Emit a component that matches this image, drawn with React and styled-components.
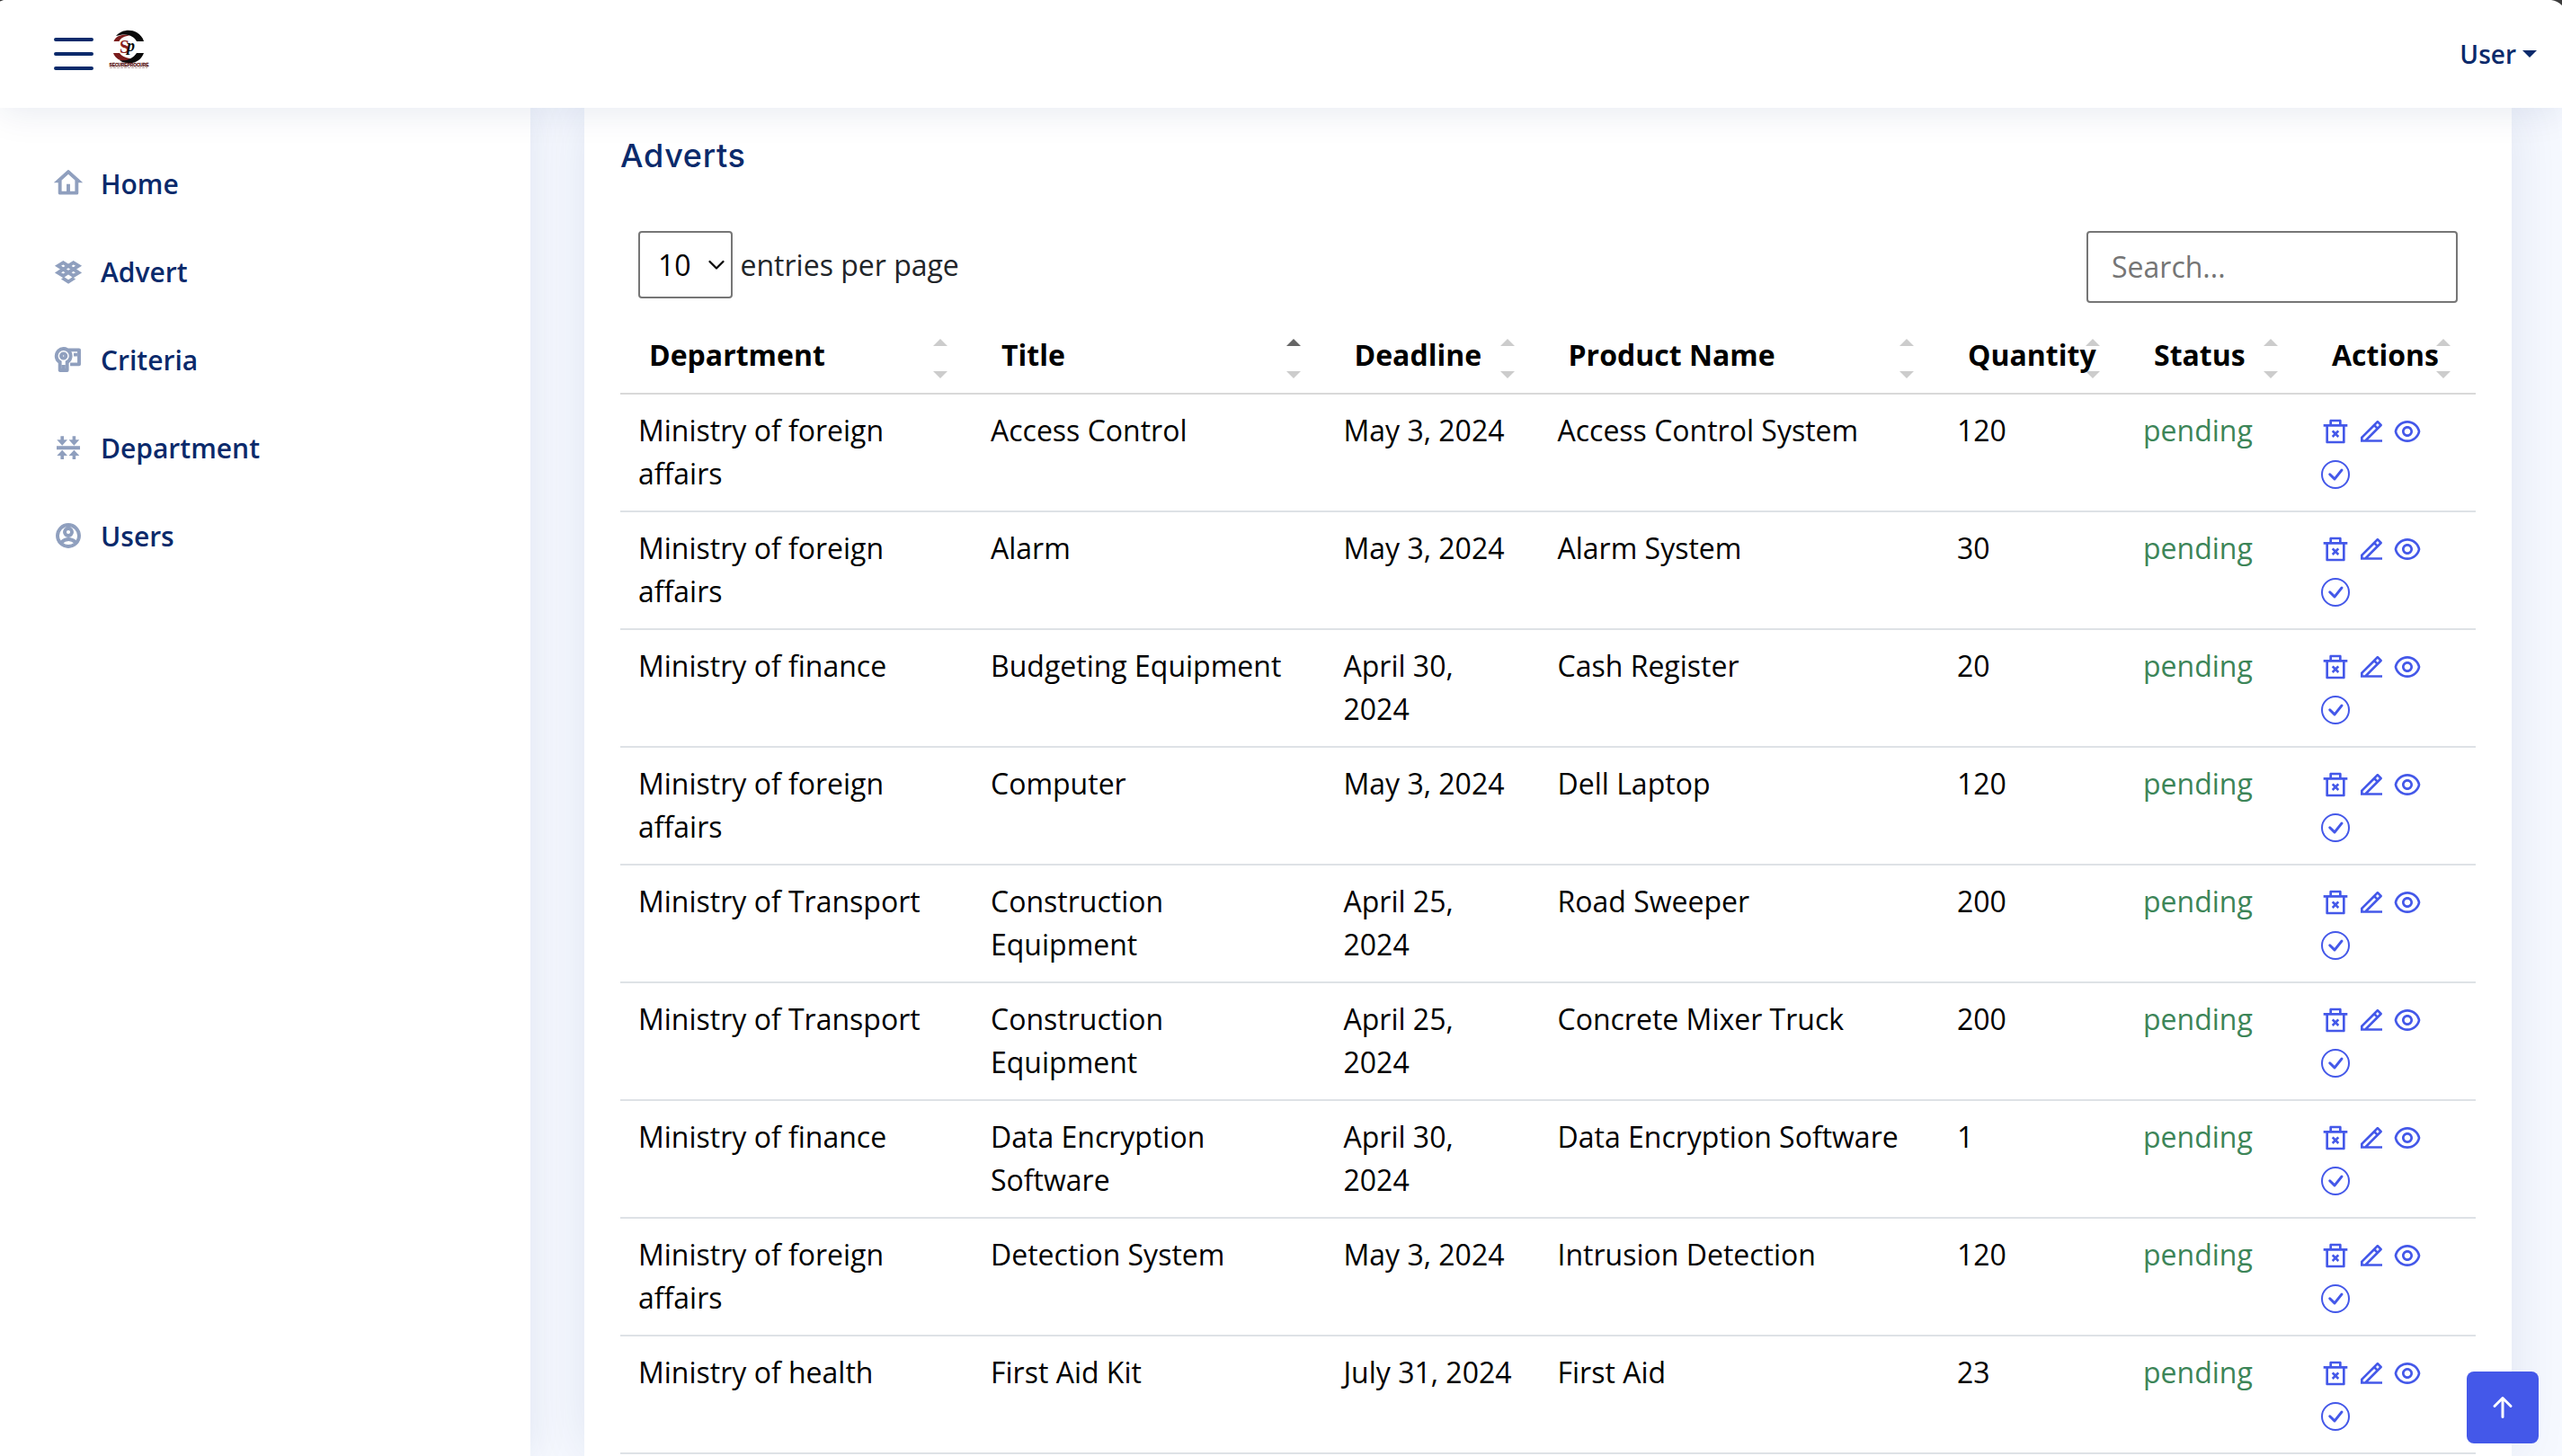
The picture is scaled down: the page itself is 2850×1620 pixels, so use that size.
import React from 'react';
import styled, { createGlobalStyle } from 'styled-components';
import {
  RiHome4Line, RiDropboxLine, RiDvLine, RiAccountCircleLine,
  RiDeleteBin2Line, RiEdit2Line, RiEyeLine,
} from 'react-icons/ri';
import { BsList, BsCheckCircle, BsArrowUpShort } from 'react-icons/bs';

const NAVY = '#0b2a6b';
const BLUE = '#4458e9';

const Global = createGlobalStyle`
  * { box-sizing: border-box; }
  body {
    margin: 0;
    background: #f6f9ff;
    font-family: "Open Sans", sans-serif;
    font-size: 32px;
    line-height: 48px;
    color: #212529;
    overflow: hidden;
  }
`;

const Page = styled.div`
  width: 2850px;
  height: 1620px;
  display: flex;
  flex-direction: column;
  overflow: hidden;
`;

const Header = styled.header`
  position: relative;
  z-index: 3;
  flex: none;
  height: 120px;
  padding: 0 28px 0 50px;
  display: flex;
  align-items: center;
  background: #fff;
  box-shadow: 0 4px 40px rgba(1, 41, 112, 0.1);
`;

const MenuIcon = styled(BsList)`
  width: 64px;
  height: 64px;
  color: ${NAVY};
`;

const LogoSvg = styled.svg`
  width: 48px;
  height: 48px;
  margin: 0 auto 8px 6px;
  overflow: visible;
`;

const UserLink = styled.a`
  display: flex;
  align-items: center;
  gap: 7px;
  font-size: 28px;
  font-weight: 600;
  line-height: 42px;
  color: ${NAVY};
`;

const Caret = styled.span`
  border: 8px solid transparent;
  border-top-color: ${NAVY};
  border-bottom: 0;
`;

const Corner = styled.svg`
  position: absolute;
  top: 0;
  ${(p) => (p.$left ? 'left: 0;' : 'right: 0;')}
`;

const Body = styled.div`
  flex: 1;
  min-height: 0;
  display: flex;
`;

const Sidebar = styled.aside`
  position: relative;
  z-index: 1;
  flex: none;
  width: 590px;
  padding: 35px 0 0 59px;
  background: #fff;
  box-shadow: 0 0 40px rgba(1, 41, 112, 0.1);
`;

const NavItem = styled.a`
  height: 98px;
  display: flex;
  align-items: center;
  gap: 19px;
  font-size: 30px;
  font-weight: 600;
  line-height: 45px;
  color: ${NAVY};
`;

const NavIcon = styled.span`
  width: 34px;
  height: 34px;
  display: flex;
  align-items: center;
  justify-content: center;
  color: #8f9fbe;
  svg {
    flex: none;
    width: 32px;
    height: 32px;
    overflow: visible;
    stroke: currentColor;
    stroke-width: 0.9px;
  }
`;

const Main = styled.main`
  flex: 1;
  padding: 0 56px 0 60px;
`;

const Card = styled.section`
  height: 100%;
  padding: 31px 40px 0;
  background: #fff;
  box-shadow: 0 0 60px rgba(1, 41, 112, 0.1);
`;

const CardTitle = styled.h5`
  margin: 0;
  font-family: Inter, "Open Sans", sans-serif;
  font-size: 36px;
  font-weight: 500;
  line-height: 44px;
  letter-spacing: 0.7px;
  color: ${NAVY};
`;

const Controls = styled.div`
  display: flex;
  justify-content: space-between;
  align-items: flex-start;
  margin-top: 62px;
  padding: 0 20px;
`;

const PerPage = styled.label`
  display: flex;
  align-items: center;
  gap: 8.5px;
`;

const SelectBox = styled.span`
  width: 105px;
  height: 75px;
  padding: 0 7px 0 20px;
  display: flex;
  align-items: center;
  justify-content: space-between;
  border: 2px solid #767676;
  border-radius: 4px;
  color: #000;
`;

const Search = styled.input`
  width: 413px;
  height: 80px;
  padding: 0 24px 1px 26px;
  border: 2px solid #767676;
  border-radius: 4px;
  background: #fff;
  font: inherit;
  &::placeholder { color: #757575; opacity: 1; }
`;

const Table = styled.table`
  width: 2064px;
  margin-top: 17px;
  table-layout: fixed;
  border-collapse: separate;
  border-spacing: 0;
  color: #000;
`;

const HeadCell = styled.th`
  position: relative;
  width: ${(p) => p.$w}px;
  height: 85px;
  padding: 0 0 2px 32px;
  text-align: left;
  font-weight: 700;
  white-space: nowrap;
  border-bottom: 2px solid #d9d9d9;
`;

const Arrow = styled.span`
  position: absolute;
  right: 28px;
  top: ${(p) => (p.$up ? 23 : 59)}px;
  border: 8px solid transparent;
  ${(p) => (p.$up
    ? `border-top: 0; border-bottom-color: rgba(0,0,0,${p.$on ? 0.6 : 0.2});`
    : 'border-bottom: 0; border-top-color: rgba(0,0,0,0.2);')}
`;

const Cell = styled.td`
  height: 131px;
  padding: 16px 20px;
  vertical-align: top;
  border-bottom: 2px solid #dee2e6;
  color: ${(p) => (p.$ok ? '#3c8558' : '#000')};
`;

const Actions = styled.div`
  display: flex;
  flex-wrap: wrap;
  gap: 16.500px 8px;
  width: 140px;
  height: 97px;
  padding-top: 8.500px;
  align-content: flex-start;
  color: ${BLUE};
  svg { width: 32px; height: 32px; }
`;

const ToTop = styled.a`
  position: fixed;
  right: 26px;
  bottom: 14px;
  z-index: 4;
  width: 80px;
  height: 80px;
  display: flex;
  align-items: center;
  justify-content: center;
  border-radius: 8px;
  background: ${BLUE};
  color: #fff;
  svg { width: 48px; height: 48px; }
`;

const Logo = () => (
  <LogoSvg viewBox="0 0 48 48">
    <path d="M9 8C15 1 25 0 32 4c4 2.500 7 6 8 10h-8C29 8 21 4 9 8z" fill="#0a0a0a" />
    <path d="M6.500 14C9 8 16 5.500 25 7.500 18 8 15 10 12.500 14z" fill="#7a1c1c" />
    <path d="M6 27h7c3 4 8 6 15 6.500-2 3-8 4-13 2C10 33.500 7.500 31 6 27z" fill="#7a1c1c" />
    <path d="M40 27c-3 8-10 12-18 11-4 0-7-1-9-3 8 1.500 15-2 19-8z" fill="#0a0a0a" />
    <text x="13" y="26.500" fontFamily="Liberation Serif, serif" fontWeight="700" fontSize="20" fill="#8a2020">S</text>
    <text x="21" y="25" fontFamily="Liberation Serif, serif" fontWeight="700" fontStyle="italic" fontSize="18" fill="#0a0a0a">p</text>
    <text x="1.500" y="41.800" fontFamily="Liberation Sans, sans-serif" fontWeight="700" fontSize="4.800" fill="#5a1515" stroke="#5a1515" strokeWidth="0.300">SECUREPROCURE</text>
    <path d="M2 43.300h42" stroke="#b9a5a5" strokeWidth="1" strokeDasharray="3 1" />
  </LogoSvg>
);

const DepartmentIcon = () => (
  <svg viewBox="1 1 32 32" fill="currentColor">
    <path stroke="none" d="M4 15.200h26v4H4zM8.400 4.300H12v4h4L10.200 14.800 4.300 8.300h4.100zM21.600 4.300h3.600v4h4.100L23.400 14.800l-5.900-6.500h4.100zM8.400 30H12v-4h4l-5.800-6.300L4.300 26h4.100zM21.600 30h3.600v-4h4.100l-5.900-6.300-5.900 6.300h4.100z" />
  </svg>
);

const NAV = [
  ['Home', RiHome4Line],
  ['Advert', RiDropboxLine],
  ['Criteria', RiDvLine],
  ['Department', DepartmentIcon],
  ['Users', RiAccountCircleLine],
];

const COLUMNS = [
  ['Department', 392], ['Title', 392.5], ['Deadline', 238], ['Product Name', 444.5],
  ['Quantity', 207], ['Status', 198], ['Actions', 192],
];

const ROWS = [
  ['Ministry of foreign affairs', 'Access Control', 'May 3, 2024', 'Access Control System', '120'],
  ['Ministry of foreign affairs', 'Alarm', 'May 3, 2024', 'Alarm System', '30'],
  ['Ministry of finance', 'Budgeting Equipment', 'April 30, 2024', 'Cash Register', '20'],
  ['Ministry of foreign affairs', 'Computer', 'May 3, 2024', 'Dell Laptop', '120'],
  ['Ministry of Transport', 'Construction Equipment', 'April 25, 2024', 'Road Sweeper', '200'],
  ['Ministry of Transport', 'Construction Equipment', 'April 25, 2024', 'Concrete Mixer Truck', '200'],
  ['Ministry of finance', 'Data Encryption Software', 'April 30, 2024', 'Data Encryption Software', '1'],
  ['Ministry of foreign affairs', 'Detection System', 'May 3, 2024', 'Intrusion Detection', '120'],
  ['Ministry of health', 'First Aid Kit', 'July 31, 2024', 'First Aid', '23'],
];

export default function App() {
  return (
    <Page>
      <Global />
      <Header>
        <MenuIcon />
        <Logo />
        <UserLink>User<Caret /></UserLink>
        <Corner $left width="4" height="2"><path d="M0 0h4L0 1.500z" fill="#333" /></Corner>
        <Corner width="12" height="7"><path d="M0 0Q7 1 12 6V0z" fill="#3b3b3b" /></Corner>
      </Header>
      <Body>
        <Sidebar>
          {NAV.map(([label, Icon]) => (
            <NavItem key={label}><NavIcon><Icon /></NavIcon>{label}</NavItem>
          ))}
        </Sidebar>
        <Main>
          <Card>
            <CardTitle>Adverts</CardTitle>
            <Controls>
              <PerPage>
                <SelectBox>
                  10
                  <svg width="18" height="12" viewBox="0 0 18 12" fill="none" stroke="#000" strokeWidth="2.200" strokeLinecap="round" strokeLinejoin="round">
                    <path d="M1.500 2 9 9.500 16.500 2" />
                  </svg>
                </SelectBox>
                entries per page
              </PerPage>
              <Search placeholder="Search..." />
            </Controls>
            <Table>
              <thead>
                <tr>
                  {COLUMNS.map(([name, w]) => (
                    <HeadCell key={name} $w={w}>
                      {name}
                      <Arrow $up $on={name === 'Title'} />
                      <Arrow />
                    </HeadCell>
                  ))}
                </tr>
              </thead>
              <tbody>
                {ROWS.map((row, i) => (
                  <tr key={i}>
                    {row.map((text, j) => <Cell key={j}>{text}</Cell>)}
                    <Cell $ok>pending</Cell>
                    <Cell>
                      <Actions>
                        <RiDeleteBin2Line /><RiEdit2Line /><RiEyeLine /><BsCheckCircle />
                      </Actions>
                    </Cell>
                  </tr>
                ))}
              </tbody>
            </Table>
          </Card>
        </Main>
      </Body>
      <ToTop><BsArrowUpShort /></ToTop>
    </Page>
  );
}
